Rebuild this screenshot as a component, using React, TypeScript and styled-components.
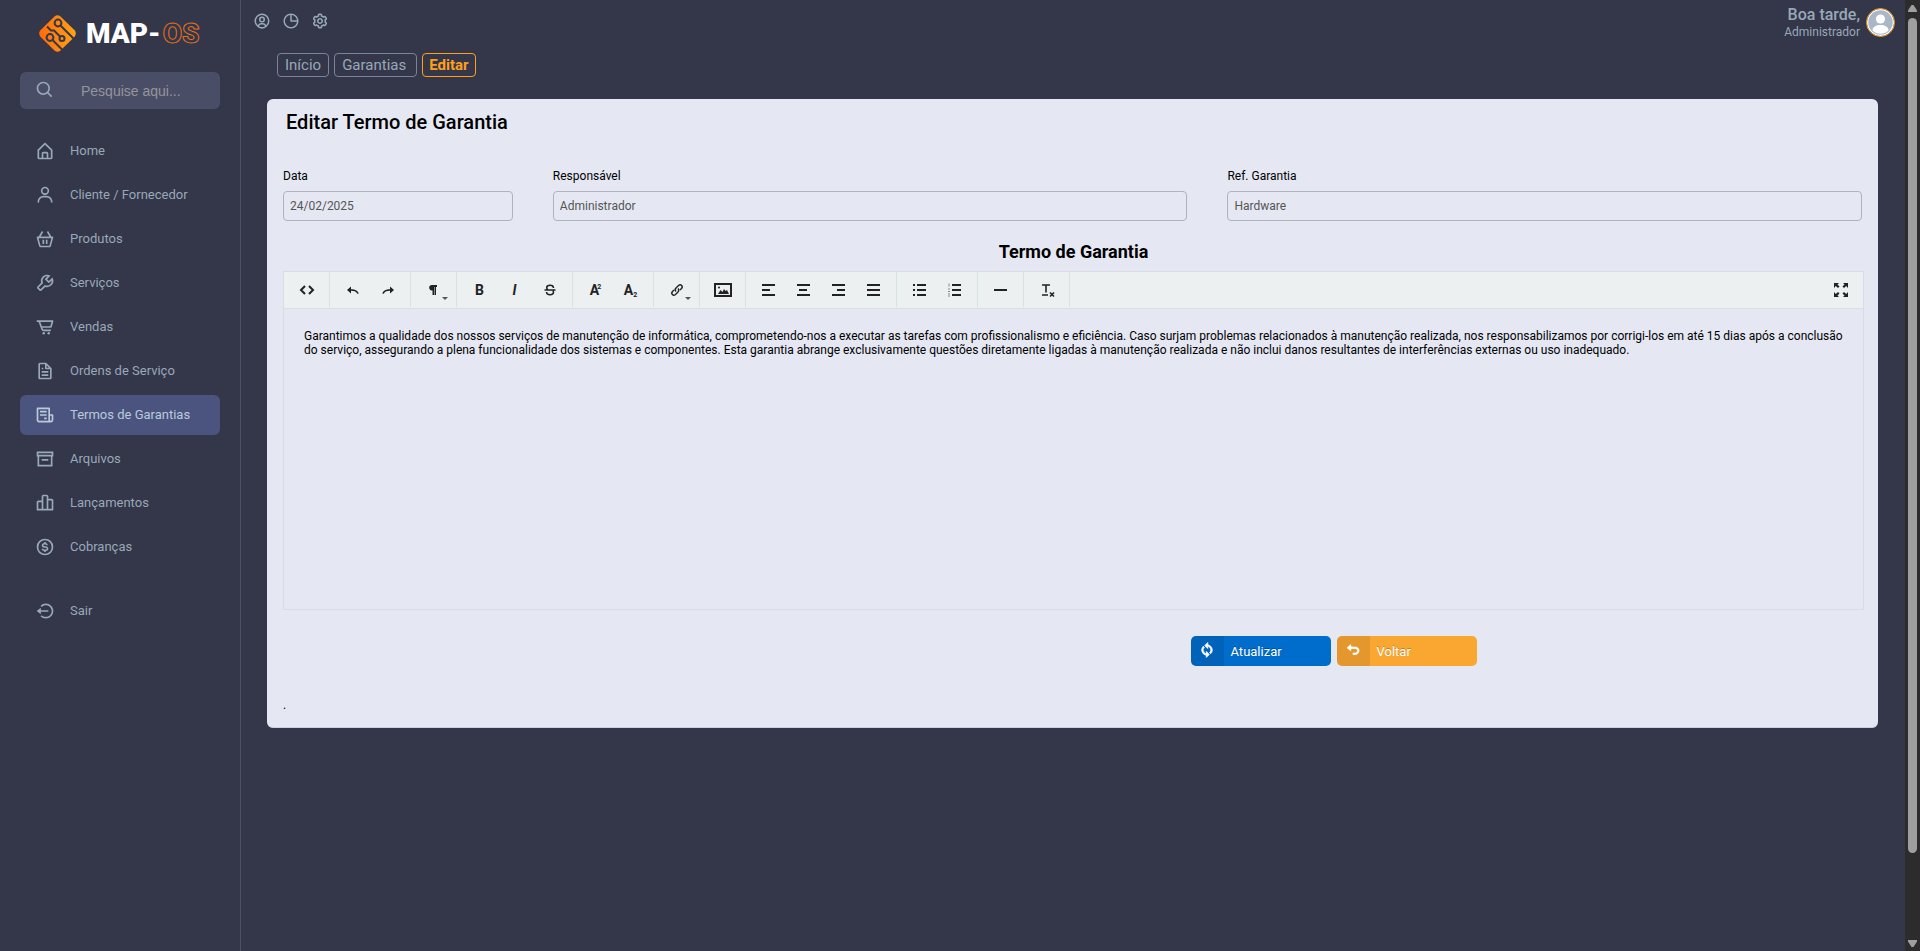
import React from "react";
import styled, { createGlobalStyle, css } from "styled-components";
import {
  BiHomeAlt,
  BiUser,
  BiBasket,
  BiWrench,
  BiCartAlt,
  BiFile,
  BiReceipt,
  BiBarChartAlt2,
  BiDollarCircle,
  BiLogOutCircle,
  BiSearch,
  BiUserCircle,
  BiPieChartAlt,
  BiCog,
  BiSync,
  BiUndo,
} from "react-icons/bi";

const color = {
  page: "#343649",
  line: "#4c5063",
  muted: "#98a9b8",
  field: "#4a4d66",
  active: "#4b547f",
  accent: "#ff9f1a",
  panel: "#e5e8f3",
  icon: "#222222",
  toolbarLine: "#d7e0e2",
};

const GlobalStyle = createGlobalStyle`
  * { box-sizing: border-box; }
  body {
    margin: 0;
    background: ${color.page};
    color: #000;
    font: 12px/20px Roboto, sans-serif;
  }
  button, input { font-family: inherit; }
  a { color: inherit; text-decoration: none; }
  svg { display: block; flex-shrink: 0; }
`;

const Shell = styled.div`
  display: grid;
  grid-template-columns: 241px minmax(0, 1fr) 15px;
  min-height: 100vh;
`;

/* ---------- Sidebar ---------- */

const Sidebar = styled.aside`
  padding: 15px 20px;
  border-right: 1px solid ${color.line};
`;

const Logo = styled.a`
  display: flex;
  align-items: center;
  gap: 10px;
  height: 37px;
  padding-left: 19px;
  color: #fff;
  font-size: 28px;
  font-weight: 900;
  line-height: 37px;
`;

const LogoOutline = styled.span`
  margin-left: 2px;
  color: transparent;
  -webkit-text-stroke: 1px #e5721a;
`;

const SearchBox = styled.label`
  display: flex;
  align-items: center;
  gap: 26px;
  height: 37px;
  margin: 20px 0 22px;
  padding: 0 15px 2px;
  border-radius: 6px;
  background: ${color.field};
  color: ${color.muted};
`;

const SearchInput = styled.input`
  width: 100%;
  min-width: 0;
  padding: 3px 0 0;
  border: 0;
  outline: 0;
  background: none;
  color: ${color.muted};
  font-family: "Liberation Sans", Arial, sans-serif;
  font-size: 14px;
  &::placeholder { color: #93959c; opacity: 1; }
`;

const Menu = styled.ul`
  display: flex;
  flex-direction: column;
  gap: 4px;
  margin: 0;
  padding: 0;
  list-style: none;
`;

const MenuItem = styled.li<{ $apart?: boolean }>`
  margin-top: ${(p) => (p.$apart ? "20px" : "0")};
`;

const MenuLink = styled.a<{ $active?: boolean }>`
  display: flex;
  align-items: center;
  gap: 15px;
  height: 40px;
  padding-left: 15px;
  border-radius: 6px;
  font-size: 13px;
  color: ${(p) => (p.$active ? "#b9cbda" : color.muted)};
  background: ${(p) => (p.$active ? color.active : "none")};
`;

/* ---------- Main column ---------- */

const Main = styled.main`
  display: flex;
  flex-direction: column;
`;

const TopBar = styled.header`
  display: flex;
  justify-content: space-between;
  height: 53px;
  padding: 5px 10px 0 12px;
  color: ${color.muted};
`;

const QuickLinks = styled.nav`
  display: flex;
  gap: 11px;
  padding-top: 7px;
`;

const Account = styled.div`
  display: flex;
  gap: 6px;
  text-align: right;
`;

const Greeting = styled.div`
  font-size: 16px;
  font-weight: 500;
  line-height: 20px;
`;

const UserName = styled.div`
  font-size: 12px;
  line-height: 14px;
`;

const Avatar = styled.span`
  width: 29px;
  height: 29px;
  margin-top: 3px;
  border: 1px solid ${color.accent};
  border-radius: 50%;
  overflow: hidden;
`;

const Breadcrumb = styled.nav`
  display: flex;
  gap: 5px;
  padding-left: 36px;
`;

const Crumb = styled.a<{ $current?: boolean; $wide?: boolean }>`
  height: 24px;
  padding: 0 ${(p) => (p.$wide ? "10px" : "7px")} 0 7px;
  border: 1px solid #79839a;
  border-radius: 4px;
  color: ${color.muted};
  font-size: 15px;
  line-height: 22px;
  ${(p) =>
    p.$current &&
    css`
      padding: 0 6px;
      border-color: ${color.accent};
      color: ${color.accent};
      font-weight: 700;
    `}
`;

const Panel = styled.section`
  margin: 22px 27px 0 26px;
  padding: 0 14px 12px 16px;
  border-bottom: 1px solid #cdd1df;
  border-radius: 6px;
  background: ${color.panel};
`;

const PanelTitle = styled.h1`
  margin: 0;
  padding: 10px 3px 0;
  font-size: 20px;
  font-weight: 500;
  line-height: 26px;
`;

const Fields = styled.div`
  display: grid;
  grid-template-columns: 46fr 127fr 127fr;
  gap: 40px;
  padding: 31px 2px 0 0;
`;

const Field = styled.label`
  display: flex;
  flex-direction: column;
  gap: 5px;
`;

const TextInput = styled.input`
  width: 100%;
  height: 30px;
  padding: 0 6px;
  border: 1px solid #b0b3bd;
  border-radius: 4px;
  background: none;
  color: #555;
  font-size: 12px;
`;

const SectionTitle = styled.h2`
  margin: 21px 0 9px;
  font-size: 18px;
  font-weight: 700;
  line-height: 20px;
  text-align: center;
`;

/* ---------- Editor ---------- */

const Editor = styled.div`
  border: 1px solid #d8dce7;
`;

const Toolbar = styled.div`
  display: flex;
  height: 37px;
  border-bottom: 1px solid ${color.toolbarLine};
  background: #ecf0f1;
`;

const ToolGroup = styled.div<{ $last?: boolean }>`
  display: flex;
  height: 35px;
  padding: 0 5px;
  ${(p) =>
    p.$last
      ? css`
          margin-left: auto;
        `
      : css`
          border-right: 1px solid ${color.toolbarLine};
        `}
`;

const ToolButton = styled.button<{ $menu?: boolean }>`
  position: relative;
  display: flex;
  align-items: center;
  justify-content: center;
  width: 35px;
  height: 35px;
  padding: 0;
  border: 0;
  background: none;
  color: ${color.icon};
  ${(p) =>
    p.$menu &&
    css`
      &::after {
        content: "";
        position: absolute;
        right: 3px;
        bottom: 7px;
        border: 3px solid transparent;
        border-top-color: #555;
        border-bottom: 0;
      }
    `}
`;

const EditorBody = styled.div`
  height: 300px;
  padding: 20px;
  outline: 0;
  line-height: 14px;
  p { margin: 0; }
`;

const Actions = styled.div`
  display: flex;
  gap: 6px;
  padding: 26px 0 29px calc(50% + 117px);
`;

const ActionButton = styled.button<{ $bg: string }>`
  display: flex;
  align-items: center;
  width: 140px;
  height: 30px;
  padding: 0;
  border: 0;
  border-radius: 5px;
  overflow: hidden;
  background: ${(p) => p.$bg};
  color: #fff;
  font-size: 13px;
  text-shadow: 0 -1px 0 rgba(0, 0, 0, 0.25);
`;

const ActionIcon = styled.span`
  display: grid;
  place-items: center;
  width: 33px;
  height: 30px;
  margin-right: 7px;
  padding-bottom: 3px;
  background: rgba(0, 0, 0, 0.09);
  svg { stroke: #fff; stroke-width: 1px; }
`;

/* ---------- Page scroll rail ---------- */

const ScrollRail = styled.div`
  position: sticky;
  top: 0;
  display: flex;
  flex-direction: column;
  align-items: center;
  height: 100vh;
  padding: 5px 0 4px;
  background: #2c2c2c;
`;

const ScrollThumb = styled.div`
  flex: 835;
  width: 9px;
  margin-top: 6px;
  border-radius: 5px;
  background: #9f9f9f;
`;

const ScrollSpace = styled.div`
  flex: 87;
`;

/* ---------- Drawings ---------- */

const LogoMark = () => (
  <svg width="37" height="37" viewBox="0 0 37 37" aria-hidden="true">
    <defs>
      <linearGradient id="mark" x1="0" y1="0" x2="1" y2="0">
        <stop offset="0" stopColor="#ff6a0a" />
        <stop offset="1" stopColor="#ffa416" />
      </linearGradient>
    </defs>
    <path
      d="M15.500 1.400Q18.500-1 21.500 1.400L35.600 15.300Q38 18.500 35.600 21.700L21.500 35.600Q18.500 38 15.500 35.600L1.400 21.700Q-1 18.500 1.400 15.300Z"
      fill="url(#mark)"
    />
    <g fill="none" stroke={color.page} strokeWidth="2">
      <circle cx="19" cy="8" r="3.400" />
      <path d="M21.500 10.500 35.500 24.500" />
      <circle cx="11" cy="22.500" r="3.400" />
      <path d="M13.500 25 24.500 36" />
      <path d="M8 11.500 12 15.500h3l6 6" />
      <circle cx="23" cy="23.500" r="2.500" />
    </g>
  </svg>
);

const AvatarArt = () => (
  <svg width="27" height="27" viewBox="0 0 27 27" aria-hidden="true">
    <circle cx="13.500" cy="13.500" r="13.500" fill="#fff" />
    <circle cx="13.500" cy="13.500" r="12.200" fill="#a9b7c9" />
    <circle cx="13.500" cy="10" r="4.600" fill="#fff" />
    <path d="M5.500 21.500c0-3.600 3.600-5.500 8-5.500s8 1.900 8 5.500a11.500 11.500 0 0 1-16 0z" fill="#fff" />
  </svg>
);

const ArchiveIcon = ({ size }: { size: number }) => (
  <svg width={size} height={size} viewBox="0 0 24 24" fill="none" stroke="currentColor" strokeWidth="2" aria-hidden="true">
    <path d="M3 4h18v4H3zM4 8v12h16V8M8 13h8" />
  </svg>
);

const Arrow = ({ down }: { down?: boolean }) => (
  <svg width="9" height="7" viewBox="0 0 9 7" aria-hidden="true">
    <path d={down ? "M0 0h9v1.500L5.500 7h-2L0 1.500z" : "M0 7h9V5.500L5.500 0h-2L0 5.500z"} fill="#9f9f9f" />
  </svg>
);

const lineIcon = (d: string, strokeWidth = 2) => (
  <svg width="18" height="18" viewBox="0 0 18 18" fill="none" stroke="currentColor" strokeWidth={strokeWidth} aria-hidden="true">
    <path d={d} />
  </svg>
);

const Glyph = styled.span<{ $italic?: boolean; $sub?: boolean }>`
  font-size: 14px;
  font-weight: 700;
  font-style: ${(p) => (p.$italic ? "italic" : "normal")};
  line-height: 18px;
  small {
    margin-left: ${(p) => (p.$sub ? "0" : "-2px")};
    font-size: 7px;
    line-height: 0;
    vertical-align: ${(p) => (p.$sub ? "-2px" : "6px")};
  }
`;

const solidIcon = (d: string) => (
  <svg width="18" height="18" viewBox="0 0 18 18" fill="currentColor" aria-hidden="true">
    <path d={d} />
  </svg>
);

type Tool = { label: string; art: React.ReactNode; menu?: boolean };

const toolGroups: Tool[][] = [
  [{ label: "Ver HTML", art: lineIcon("M7 5 3 9l4 4M11 5l4 4-4 4") }],
  [
    { label: "Desfazer", art: solidIcon("M3 9l4-3.500V8.200c4 0 6.500 1 7.800 4.300l-1.500.3C12 10.400 10 9.800 7 9.800v2.700z") },
    { label: "Refazer", art: solidIcon("M15 9l-4-3.500V8.200c-4 0-6.500 1-7.800 4.300l1.500.3C6 10.400 8 9.800 11 9.800v2.700z") },
  ],
  [{ label: "Formatação", menu: true, art: solidIcon("M12 4v2h-1v8H9.500V6H9v8H7.500V9.500a2.750 2.750 0 0 1-1-5.500z") }],
  [
    { label: "Negrito", art: <Glyph>B</Glyph> },
    { label: "Itálico", art: <Glyph $italic>I</Glyph> },
    {
      label: "Riscado",
      art: lineIcon("M3.500 9h11M12.500 7c0-1.500-1.300-2.700-3.500-2.700S5.700 5.300 5.700 6.700c0 .8.400 1.300 1 1.800M5.500 11c0 1.500 1.400 2.700 3.500 2.700s3.500-1 3.500-2.400c0-.6-.2-1-.6-1.500", 1.5),
    },
  ],
  [
    { label: "Sobrescrito", art: <Glyph>A<small>2</small></Glyph> },
    { label: "Subscrito", art: <Glyph $sub>A<small>2</small></Glyph> },
  ],
  [
    {
      label: "Link",
      menu: true,
      art: lineIcon("M8 10.500C6.800 9.300 7 8 8 7l2.500-2.500c2.300-2 5 .7 3 3L12 9M10 7.500c1.200 1.200 1 2.500 0 3.500l-2.500 2.500c-2.300 2-5-.7-3-3L6 9", 1.4),
    },
  ],
  [
    {
      label: "Inserir imagem",
      art: (
        <svg width="18" height="14" viewBox="0 0 18 14" aria-hidden="true">
          <path d="M1 1h16v12H1z" fill="none" stroke="currentColor" strokeWidth="2" />
          <path d="M4 11l2.500-4 2 2 1.500-3 1.500 2L13 7l2 4z" fill="currentColor" />
          <circle cx="5" cy="4.500" r="1" fill="currentColor" />
        </svg>
      ),
    },
  ],
  [
    { label: "Alinhar à esquerda", art: lineIcon("M2 4h13M2 9h8M2 14h13") },
    { label: "Centralizar", art: lineIcon("M2 4h13M4 9h8M2 14h13") },
    { label: "Alinhar à direita", art: lineIcon("M2 4h13M7 9h8M2 14h13") },
    { label: "Justificar", art: lineIcon("M2 4h13M2 9h13M2 14h13") },
  ],
  [
    { label: "Lista não ordenada", art: lineIcon("M2 4h2M6 4h9M2 9h2M6 9h9M2 14h2M6 14h9") },
    {
      label: "Lista ordenada",
      art: (
        <svg width="18" height="18" viewBox="0 0 18 18" fill="none" stroke="currentColor" aria-hidden="true">
          <path d="M6 4h9M6 9h9M6 14h9" strokeWidth="2" />
          <path d="M3 2.500v3M2 8h2M2 10.500h2M2 13h2M2 15h2" strokeWidth="1" opacity=".5" />
        </svg>
      ),
    },
  ],
  [{ label: "Linha horizontal", art: lineIcon("M2 9h13") }],
  [{ label: "Remover formatação", art: lineIcon("M4 4h8M8 4v7.500M4 14h6M12 11.500l4 4M16 11.500l-4 4", 1.6) }],
];

const menu = [
  { label: "Home", Icon: BiHomeAlt },
  { label: "Cliente / Fornecedor", Icon: BiUser },
  { label: "Produtos", Icon: BiBasket },
  { label: "Serviços", Icon: BiWrench },
  { label: "Vendas", Icon: BiCartAlt },
  { label: "Ordens de Serviço", Icon: BiFile },
  { label: "Termos de Garantias", Icon: BiReceipt, active: true },
  { label: "Arquivos", Icon: ArchiveIcon },
  { label: "Lançamentos", Icon: BiBarChartAlt2 },
  { label: "Cobranças", Icon: BiDollarCircle },
  { label: "Sair", Icon: BiLogOutCircle, apart: true },
];

export default function App() {
  return (
    <>
      <GlobalStyle />
      <Shell>
        <Sidebar>
          <Logo href="#" aria-label="MAP-OS">
            <LogoMark />
            <span>
              MAP-<LogoOutline>OS</LogoOutline>
            </span>
          </Logo>
          <SearchBox>
            <BiSearch size={20} />
            <SearchInput type="search" placeholder="Pesquise aqui..." aria-label="Pesquisar" />
          </SearchBox>
          <Menu>
            {menu.map(({ label, Icon, active, apart }) => (
              <MenuItem key={label} $apart={apart}>
                <MenuLink href="#" $active={active}>
                  <Icon size={20} />
                  {label}
                </MenuLink>
              </MenuItem>
            ))}
          </Menu>
        </Sidebar>

        <Main>
          <TopBar>
            <QuickLinks>
              <a href="#" aria-label="Perfil"><BiUserCircle size={18} /></a>
              <a href="#" aria-label="Relatórios"><BiPieChartAlt size={18} /></a>
              <a href="#" aria-label="Configurações"><BiCog size={18} /></a>
            </QuickLinks>
            <Account>
              <div>
                <Greeting>Boa tarde,</Greeting>
                <UserName>Administrador</UserName>
              </div>
              <Avatar><AvatarArt /></Avatar>
            </Account>
          </TopBar>

          <Breadcrumb>
            <Crumb href="#">Início</Crumb>
            <Crumb href="#" $wide>Garantias</Crumb>
            <Crumb href="#" $current>Editar</Crumb>
          </Breadcrumb>

          <Panel>
            <PanelTitle>Editar Termo de Garantia</PanelTitle>
            <Fields>
              <Field>
                Data
                <TextInput defaultValue="24/02/2025" />
              </Field>
              <Field>
                Responsável
                <TextInput defaultValue="Administrador" />
              </Field>
              <Field>
                Ref. Garantia
                <TextInput defaultValue="Hardware" />
              </Field>
            </Fields>

            <SectionTitle>Termo de Garantia</SectionTitle>
            <Editor>
              <Toolbar>
                {toolGroups.map((group) => (
                  <ToolGroup key={group[0].label}>
                    {group.map((tool) => (
                      <ToolButton key={tool.label} type="button" aria-label={tool.label} $menu={tool.menu}>
                        {tool.art}
                      </ToolButton>
                    ))}
                  </ToolGroup>
                ))}
                <ToolGroup $last>
                  <ToolButton type="button" aria-label="Tela cheia">
                    {solidIcon("M2 2h5L5.500 3.500 7.500 5.500 6 7 3.800 5 2 7zM16 2v5l-1.800-2L12 7l-1.500-1.500 2-2L11 2zM2 16v-5l1.800 2L6 11l1.500 1.500-2 2L7 16zM16 16h-5l1.500-1.500-2-2L12 11l2.200 2 1.800-2z")}
                  </ToolButton>
                </ToolGroup>
              </Toolbar>
              <EditorBody contentEditable suppressContentEditableWarning role="textbox" aria-label="Termo de Garantia">
                <p>
                  Garantimos a qualidade dos nossos serviços de manutenção de informática, comprometendo-nos a executar
                  as tarefas com profissionalismo e eficiência. Caso surjam problemas relacionados à manutenção
                  realizada, nos responsabilizamos por corrigi-los em até 15 dias após a conclusão do serviço,
                  assegurando a plena funcionalidade dos sistemas e componentes. Esta garantia abrange exclusivamente
                  questões diretamente ligadas à manutenção realizada e não inclui danos resultantes de interferências
                  externas ou uso inadequado.
                </p>
              </EditorBody>
            </Editor>

            <Actions>
              <ActionButton type="submit" $bg="#006dcc">
                <ActionIcon><BiSync size={18} /></ActionIcon>
                Atualizar
              </ActionButton>
              <ActionButton type="button" $bg="#faa732">
                <ActionIcon><BiUndo size={18} /></ActionIcon>
                Voltar
              </ActionButton>
            </Actions>
            <div>.</div>
          </Panel>
        </Main>

        <ScrollRail aria-hidden="true">
          <Arrow />
          <ScrollThumb />
          <ScrollSpace />
          <Arrow down />
        </ScrollRail>
      </Shell>
    </>
  );
}
